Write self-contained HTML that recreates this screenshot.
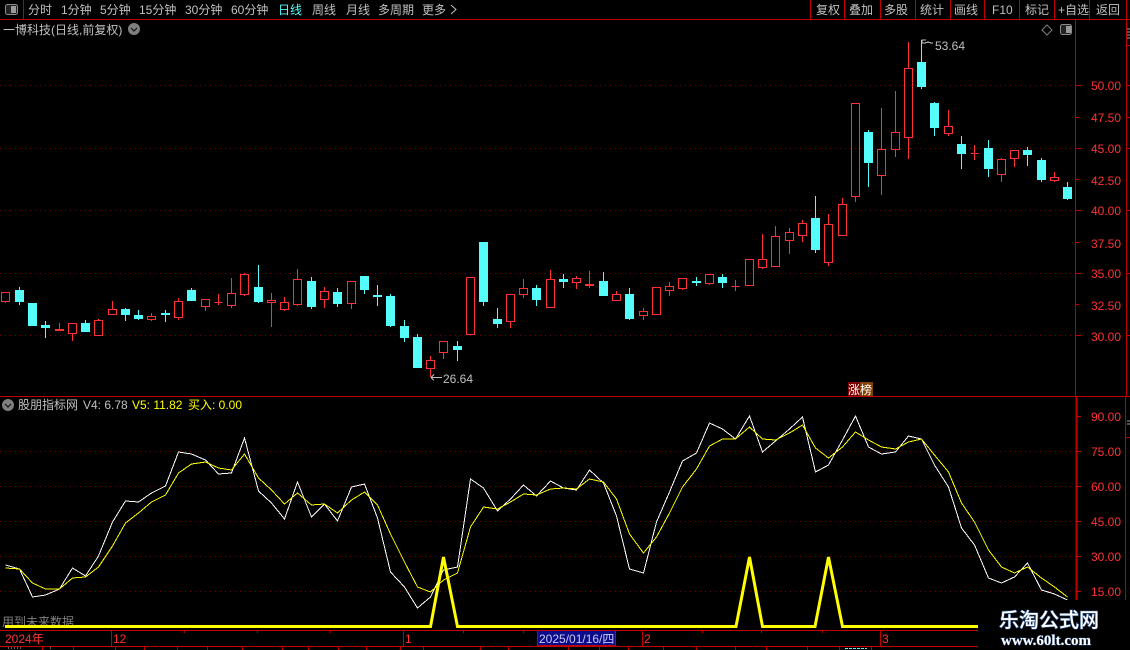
<!DOCTYPE html>
<html><head><meta charset="utf-8"><style>
html,body{margin:0;padding:0;background:#000;width:1130px;height:650px;overflow:hidden}
svg{display:block}
text{font-family:"Liberation Sans","WenQuanYi Zen Hei","Noto Sans CJK SC",sans-serif;font-size:12px;fill:#c0c0c0}
.r text,text.r{fill:#ff3232}
.y text,text.y{fill:#ffff00}
</style></head><body>
<svg width="1130" height="650" viewBox="0 0 1130 650" xmlns="http://www.w3.org/2000/svg">
<rect width="1130" height="650" fill="#000"/>
<!-- grid -->
<g stroke="#7a0000" stroke-width="1" stroke-dasharray="1 4" fill="none" shape-rendering="crispEdges">
<path d="M0 85.5H1075M0 148.5H1075M0 210.5H1075M0 273.5H1075M0 335.5H1075"/>
<path d="M0 451.5H1076M0 486.5H1076M0 521.5H1076M0 556.5H1076M0 591.5H1076"/>
</g>
<!-- frame lines -->
<g stroke="#c00000" stroke-width="1" fill="none" shape-rendering="crispEdges">
<path d="M0 19.5H1130M0 396.5H1130"/>
<path d="M23.5 0V19M810.5 0V19M844.5 0V19M880.5 0V19M915.5 0V19M950.5 0V19M984.5 0V19M1019.5 0V19M1054.5 0V19M1089.5 0V19"/>
<path d="M1075.5 19V396M1126.5 0V396M1125.5 396V600"/>
<path d="M1076 85.5h5M1076 117.5h3M1076 148.5h5M1076 179.5h3M1076 210.5h5M1076 242.5h3M1076 273.5h5M1076 304.5h3M1076 335.5h5"/>
<path d="M1127 45.5h3M1127 85.5h3M1127 117.5h3M1127 148.5h3M1127 210.5h3M1127 273.5h3M1127 335.5h3M1126 437.5h4"/>
<path d="M1076 416.5h5M1076 451.5h5M1076 486.5h5M1076 521.5h5M1076 556.5h5M1076 591.5h5"/>
</g>
<path d="M1127 29h3M1127 32h3M1127 35h3M1127 38h3M1127 421h3M1127 424h3" stroke="#a0a0a0" fill="none" shape-rendering="crispEdges"/>
<path d="M1076.5 396V600" stroke="#c00000" stroke-width="2" fill="none"/>
<!-- red candles -->
<path fill="none" stroke="#ff3232" stroke-width="1" shape-rendering="crispEdges" d="
M1.5 292.5h8v9h-8zM5.5 302v1
M59.5 323V329M55.5 329.5h8v1h-8z
M68.5 323.5h8v10h-8zM72.5 334V341
M94.5 320.5h8v15h-8zM98.5 319v1
M108.5 309.5h8v5h-8zM112.5 301V309
M147.5 316.5h8v3h-8zM151.5 313V316M151.5 320v1
M174.5 301.5h8v16h-8zM178.5 298V301M178.5 318v2
M201.5 299.5h8v7h-8zM205.5 307V311
M214.5 302.5h8M218.5 294V305
M227.5 293.5h8v12h-8zM231.5 278V293M231.5 306v2
M240.5 274.5h8v20h-8zM244.5 273v1M244.5 295v1
M267.5 300.5h8v2h-8zM271.5 293V300M271.5 303V327
M280.5 302.5h8v7h-8zM284.5 297V302M284.5 310v1
M293.5 279.5h8v25h-8zM297.5 269V279M297.5 305v1
M320.5 291.5h8v8h-8zM324.5 287V291M324.5 300V308
M347.5 281.5h8v22h-8zM351.5 304V309
M426.5 360.5h8v8h-8zM430.5 356V360M430.5 369V377
M439.5 341.5h8v11h-8zM443.5 353V359
M466.5 277.5h8v57h-8z
M506.5 294.5h8v27h-8zM510.5 322V328
M519.5 288.5h8v6h-8zM523.5 279V288M523.5 295V298
M546.5 279.5h8v28h-8zM550.5 270V279
M572.5 278.5h8v4h-8zM576.5 276V278M576.5 283V289
M585.5 284.5h8v1h-8zM589.5 271V284M589.5 286V288
M612.5 294.5h8v6h-8zM616.5 291V294
M639.5 311.5h8v4h-8zM643.5 308V311M643.5 316V320
M652.5 287.5h8v27h-8z
M665.5 286.5h8v4h-8zM669.5 282V286M669.5 291V296
M678.5 278.5h8v10h-8zM682.5 289v1
M705.5 274.5h8v9h-8zM709.5 284v1
M731.5 286.5h8M735.5 280V291
M745.5 259.5h8v26h-8z
M758.5 259.5h8v8h-8zM762.5 234V259M762.5 268v1
M771.5 236.5h8v30h-8zM775.5 226V236
M785.5 232.5h8v8h-8zM789.5 228V232M789.5 241V254
M798.5 223.5h8v12h-8zM802.5 220V223M802.5 236V242
M824.5 224.5h8v38h-8zM828.5 214V224M828.5 263V266
M838.5 204.5h8v31h-8zM842.5 198V204
M851.5 103.5h8v93h-8zM855.5 197V202
M877.5 149.5h8v26h-8zM881.5 108V149M881.5 176V195
M891.5 132.5h8v17h-8zM895.5 91V132M895.5 150V157
M904.5 68.5h8v69h-8zM908.5 42V68M908.5 138V159
M944.5 126.5h8v7h-8zM948.5 110V126M948.5 134V136
M970.5 153.5h8M974.5 145V160
M997.5 159.5h8v15h-8zM1001.5 158v1M1001.5 175V182
M1010.5 150.5h8v8h-8zM1014.5 159V167
M1050.5 177.5h8v3h-8zM1054.5 172V177M1054.5 181v1"/>
<!-- cyan wicks -->
<path fill="none" stroke="#54fcfc" stroke-width="1" shape-rendering="crispEdges" d="M19.5 287V305M45.5 321V338M85.5 320V323M125.5 308V321M138.5 310V320M165.5 310V322M191.5 288V290M258.5 265V303M311.5 277V309M337.5 288V307M364.5 290V294M377.5 285V306M390.5 294V327M404.5 320V342M417.5 334V337M457.5 341V361M483.5 302V306M497.5 308V328M536.5 285V306M563.5 274V288M603.5 272V281M629.5 288V320M696.5 277V286M722.5 274V288M815.5 196V253M868.5 130V187M921.5 40V89M934.5 102V136M961.5 136V169M988.5 140V177M1027.5 147V166M1041.5 158V182M1067.5 182V200"/>
<!-- cyan bodies -->
<path fill="#54fcfc" shape-rendering="crispEdges" d="M15 290h9v12h-9zM28 303h9v23h-9zM41 325h9v3h-9zM81 323h9v9h-9zM121 309h9v6h-9zM134 315h9v4h-9zM161 313h9v2h-9zM187 290h9v11h-9zM254 287h9v15h-9zM307 281h9v26h-9zM333 292h9v12h-9zM360 276h9v14h-9zM373 295h9v2h-9zM386 296h9v30h-9zM400 326h9v12h-9zM413 337h9v31h-9zM453 346h9v4h-9zM479 242h9v60h-9zM493 319h9v5h-9zM532 288h9v12h-9zM559 279h9v3h-9zM599 281h9v15h-9zM625 294h9v25h-9zM692 281h9v2h-9zM718 277h9v6h-9zM811 218h9v32h-9zM864 132h9v31h-9zM917 62h9v25h-9zM930 103h9v25h-9zM957 144h9v10h-9zM984 148h9v21h-9zM1023 150h9v5h-9zM1037 160h9v20h-9zM1063 187h9v12h-9z"/>
<!-- markers -->
<g stroke="#c0c0c0" fill="none" stroke-width="1" shape-rendering="crispEdges">
<path d="M431 377.5H442M431 377.5l3-3M431 377.5l3 3"/>
<path d="M922 43V40h4M922 43h3l3-1 3 1h2"/>
</g>
<text x="443" y="383">26.64</text>
<text x="935" y="50">53.64</text>
<!-- toolbar -->
<g>
<rect x="5.5" y="4.5" width="12" height="10" rx="2" fill="#222" stroke="#8a8a8a"/><rect x="11" y="6" width="5" height="7" fill="#9a9a9a"/>
<text x="28" y="14">分时</text><text x="61" y="14">1分钟</text><text x="100" y="14">5分钟</text><text x="139" y="14">15分钟</text><text x="185" y="14">30分钟</text><text x="231" y="14">60分钟</text>
<text x="278" y="14" style="fill:#54fcfc">日线</text><text x="312" y="14">周线</text><text x="346" y="14">月线</text><text x="378" y="14">多周期</text><text x="422" y="14">更多</text>
<path d="M451 5l5 4.5-5 4.5" fill="none" stroke="#c0c0c0"/>
<text x="816" y="14">复权</text><text x="849" y="14">叠加</text><text x="884" y="14">多股</text><text x="920" y="14">统计</text><text x="954" y="14">画线</text><text x="992" y="14">F10</text><text x="1025" y="14">标记</text><text x="1058" y="14">+自选</text><text x="1096" y="14">返回</text>
</g>
<!-- title -->
<text x="3" y="34">一博科技(日线,前复权)</text>
<circle cx="134" cy="29" r="6" fill="#7f7f7f"/><path d="M131 28l3 3 3-3" fill="none" stroke="#111" stroke-width="1.2"/>
<path d="M1047 25l5 5-5 5-5-5z" fill="none" stroke="#7f7f7f"/>
<rect x="1060.5" y="24.5" width="11" height="10" rx="2" fill="#222" stroke="#8a8a8a"/><rect x="1066" y="26" width="5" height="7" fill="#9a9a9a"/>
<!-- labels axis -->
<g class="r">
<text x="1091" y="90">50.00</text><text x="1091" y="122">47.50</text><text x="1091" y="153">45.00</text><text x="1091" y="185">42.50</text><text x="1091" y="215">40.00</text><text x="1091" y="248">37.50</text><text x="1091" y="278">35.00</text><text x="1091" y="310">32.50</text><text x="1091" y="341">30.00</text>
<text x="1091" y="421">90.00</text><text x="1091" y="456">75.00</text><text x="1091" y="491">60.00</text><text x="1091" y="526">45.00</text><text x="1091" y="561">30.00</text><text x="1091" y="596">15.00</text>
</g>
<!-- zhang bang -->
<rect x="848" y="382" width="12" height="14" fill="#7f0000"/><rect x="860" y="382" width="13" height="14" fill="#7f4000"/>
<text x="848" y="394" style="fill:#fff">涨榜</text>
<!-- indicator header -->
<circle cx="8" cy="405" r="6" fill="#7f7f7f"/><path d="M5 404l3 3 3-3" fill="none" stroke="#111" stroke-width="1.2"/>
<text x="18" y="409">股朋指标网</text><text x="83" y="409">V4: 6.78</text>
<text x="132" y="409" class="y">V5: 11.82</text><text x="188" y="409" class="y">买入: 0.00</text>
<text x="2" y="626" style="fill:#808080">用到未来数据</text>
<!-- indicator lines -->
<polyline fill="none" stroke="#ffffff" stroke-width="1" shape-rendering="crispEdges" points="5.5,565 19.5,569 32.5,597 45.5,595 59.5,589 72.5,568 85.5,576 98.5,556 112.5,522 125.5,501 138.5,502 151.5,493 165.5,486 178.5,452 191.5,454 205.5,460 218.5,474 231.5,473 244.5,438 258.5,491 271.5,503 284.5,519 297.5,482 311.5,517 324.5,504 337.5,521 351.5,487 364.5,484 377.5,518 390.5,572 404.5,587 417.5,608 430.5,597 443.5,570 457.5,567 470.5,479 483.5,488 497.5,511 510.5,499 523.5,485 536.5,496 550.5,481 563.5,488 576.5,490 589.5,470 603.5,483 616.5,516 629.5,569 643.5,573 656.5,522 669.5,492 682.5,461 696.5,453 709.5,423 722.5,429 735.5,439 749.5,416 762.5,452 775.5,441 789.5,429 802.5,417 815.5,472 828.5,465 842.5,440 855.5,416 868.5,447 881.5,454 895.5,452 908.5,436 921.5,439 934.5,465 948.5,487 961.5,528 974.5,545 988.5,578 1001.5,583 1014.5,577 1027.5,563 1041.5,590 1054.5,594 1067.5,600"/>
<polyline fill="none" stroke="#ffff00" stroke-width="1" shape-rendering="crispEdges" points="5.5,568 19.5,569 32.5,583 45.5,589 59.5,589 72.5,578 85.5,577 98.5,567 112.5,546 125.5,523 138.5,513 151.5,502 165.5,495 178.5,473 191.5,464 205.5,462 218.5,468 231.5,470 244.5,454 258.5,478 271.5,490 284.5,504 297.5,493 311.5,505 324.5,504 337.5,513 351.5,500 364.5,492 377.5,505 390.5,534 404.5,562 417.5,587 430.5,592 443.5,580 457.5,573 470.5,527 483.5,507 497.5,509 510.5,502 523.5,494 536.5,495 550.5,489 563.5,488 576.5,489 589.5,479 603.5,482 616.5,499 629.5,534 643.5,553 656.5,537 669.5,513 682.5,487 696.5,469 709.5,446 722.5,439 735.5,439 749.5,427 762.5,439 775.5,440 789.5,433 802.5,425 815.5,448 828.5,458 842.5,447 855.5,432 868.5,440 881.5,447 895.5,449 908.5,442 921.5,439 934.5,455 948.5,472 961.5,503 974.5,522 988.5,550 1001.5,567 1014.5,573 1027.5,567 1041.5,578 1054.5,587 1067.5,597"/>
<path fill="none" stroke="#ffff00" stroke-width="3" d="M5 626.5H430.5L443.5 557 457.5 626.5H736L749.5 557 762.5 626.5H815L828.5 557 842.5 626.5H978"/>
<!-- time axis -->
<g stroke="#c00000" fill="none" stroke-width="1" shape-rendering="crispEdges">
<path d="M0 630.5H1130M0 646.5H1130"/>
<path d="M111.5 630V646M403.5 630V646M642.5 630V646M880.5 630V646"/>
<path d="M184.5 631v2M257.5 631v2M330.5 631v2M463.5 631v2M523.5 631v2M702.5 631v2M761.5 631v2M822.5 631v2"/>
<path d="M42.5 647v3M73.5 647v3M115.5 647v3M144.5 647v3M177.5 647v3M207.5 647v3M242.5 647v3M282.5 647v3M308.5 647v3M338.5 647v3M366.5 647v3M400.5 647v3M423.5 647v3M480.5 647v3M508.5 647v3M568.5 647v3M599.5 647v3M628.5 647v3M663.5 647v3M696.5 647v3M735.5 647v3M766.5 647v3M807.5 647v3M839.5 647v3M871.5 647v3"/>
</g>
<path d="M8 648h14M50 648h3" stroke="#c0c0c0" stroke-dasharray="1 2"/>
<path d="M845 648.5h22" stroke="#54fcfc" stroke-dasharray="3 1"/>
<text x="5" y="643" class="r">2024年</text><text x="113" y="643" class="r">12</text><text x="405" y="643" class="r">1</text><text x="644" y="643" class="r">2</text><text x="882" y="643" class="r">3</text>
<rect x="537.5" y="630.5" width="78" height="15" fill="#0b0b8c" stroke="#c00000" shape-rendering="crispEdges"/>
<text x="539" y="643" style="fill:#c8c8f0">2025/01/16/四</text>
<!-- watermark -->
<rect x="978" y="600" width="152" height="50" fill="#000"/>
<text x="999" y="627" style="font-family:'Noto Sans CJK SC',sans-serif;font-size:20px;font-weight:500;fill:#fff;paint-order:stroke;stroke:#2f5590;stroke-width:1.2px">乐淘公式网</text>
<text x="1001" y="645" style="font-family:'Liberation Serif',serif;font-size:15px;font-weight:700;fill:#fff;paint-order:stroke;stroke:#2f5590;stroke-width:.8px">www.60lt.com</text>
</svg>
</body></html>
